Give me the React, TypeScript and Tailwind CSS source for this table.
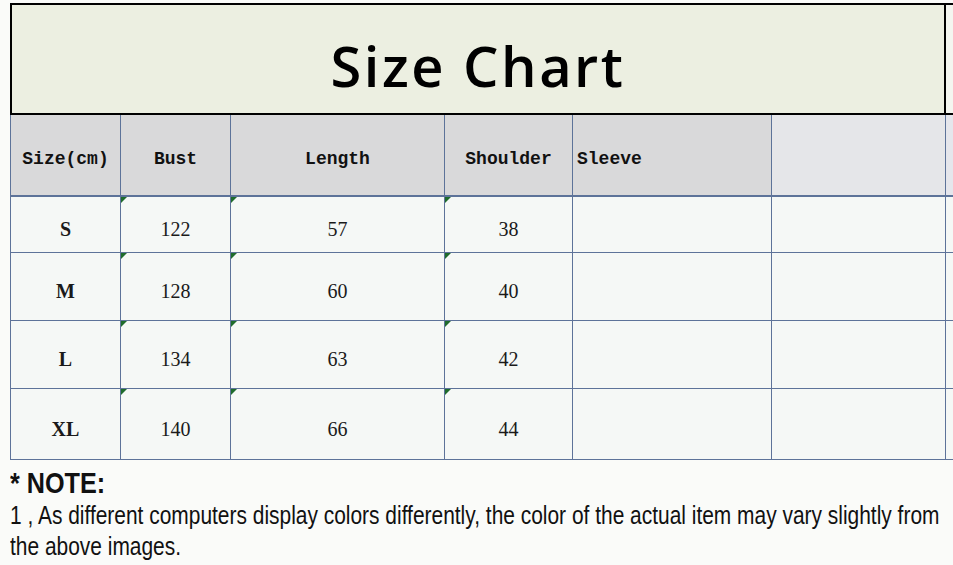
import React from "react";

const rows = [
  { size: "S", bust: "122", length: "57", shoulder: "38", h: "h-[56px]" },
  { size: "M", bust: "128", length: "60", shoulder: "40", h: "h-[68px]" },
  { size: "L", bust: "134", length: "63", shoulder: "42", h: "h-[68px]" },
  { size: "XL", bust: "140", length: "66", shoulder: "44", h: "h-[71px]" },
];

const cols = "grid grid-cols-[111px_110px_214px_128px_199px_174px_1fr]";
const line = "border-[#5d7399]";

function Marker() {
  return (
    <span className="absolute left-0 top-0 h-0 w-0 border-r-[6px] border-t-[6px] border-r-transparent border-t-[#1e6b2c]" />
  );
}

function HeadCell({ children, className = "" }: { children?: React.ReactNode; className?: string }) {
  return (
    <div
      className={`flex h-[80px] items-center border-r ${line} pt-2 font-['Liberation_Mono',monospace] text-[18px] font-bold text-[#111] ${className}`}
    >
      {children}
    </div>
  );
}

function DataCell({
  children,
  marker,
  className = "",
}: {
  children?: React.ReactNode;
  marker?: boolean;
  className?: string;
}) {
  return (
    <div
      className={`relative flex items-center justify-center border-r border-b ${line} bg-[#f5f8f6] pt-[9px] font-['Liberation_Serif',serif] text-[20px] text-[#1a1a1a] ${className}`}
    >
      {marker && <Marker />}
      {children}
    </div>
  );
}

export default function App() {
  return (
    <div className="h-[565px] w-[953px] overflow-hidden bg-[#fafbf9] pt-[3px]">
      <div className="pl-[10px]">
        {/* title band */}
        <div className={`${cols} border-t-2 border-black`}>
          <div className="col-span-6 flex h-[108px] items-center justify-center border-x-2 border-black bg-[#ecefe1] pt-3">
            <span className="font-['Open_Sans',sans-serif] text-[56px] font-semibold tracking-[2.5px] text-black">
              Size Chart
            </span>
          </div>
          <div className="h-[108px] bg-[#f4f6f0]" />
        </div>

        {/* header row */}
        <div className={`${cols} border-t-2 border-black border-b-2 border-b-[#5d7399]`}>
          <HeadCell className={`justify-center border-l ${line} bg-[#d9d9da]`}>Size(cm)</HeadCell>
          <HeadCell className="justify-center bg-[#d9d9da]">Bust</HeadCell>
          <HeadCell className="justify-center bg-[#d9d9da]">Length</HeadCell>
          <HeadCell className="justify-center bg-[#d9d9da]">Shoulder</HeadCell>
          <HeadCell className="justify-start bg-[#d9d9da] pl-1">Sleeve</HeadCell>
          <HeadCell className="bg-[#e5e6e9]" />
          <div className="h-[80px] bg-[#e5e6ec]" />
        </div>

        {/* data rows */}
        {rows.map((r) => (
          <div key={r.size} className={cols}>
            <DataCell className={`${r.h} border-l bg-[#dbeaf3] font-bold`}>{r.size}</DataCell>
            <DataCell className={r.h} marker>
              {r.bust}
            </DataCell>
            <DataCell className={r.h} marker>
              {r.length}
            </DataCell>
            <DataCell className={r.h} marker>
              {r.shoulder}
            </DataCell>
            <DataCell className={r.h} />
            <DataCell className={r.h} />
            <div className={`${r.h} border-b ${line} bg-[#f5f8f6]`} />
          </div>
        ))}

        {/* note — the source font is a narrow Arial, so squeeze horizontally */}
        <div className="pt-[6px] font-['Liberation_Sans',Arial,sans-serif] text-[#111]">
          <div className="origin-left scale-x-[0.84] whitespace-nowrap text-[30px] leading-[34px] font-bold">
            * NOTE:
          </div>
          <div className="origin-left scale-x-[0.805] whitespace-nowrap text-[26px] leading-[31px]">
            1 , As different computers display colors differently, the color of the actual item may vary slightly from
          </div>
          <div className="origin-left scale-x-[0.805] whitespace-nowrap text-[26px] leading-[31px]">
            the above images.
          </div>
        </div>
      </div>
    </div>
  );
}
